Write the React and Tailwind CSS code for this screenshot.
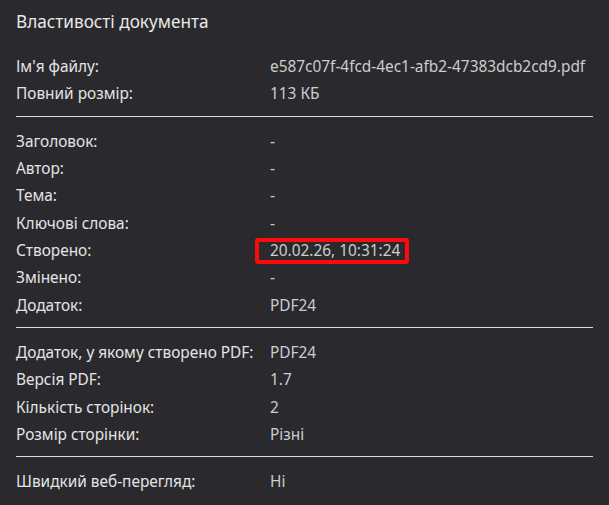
import React from "react";

const sections = [
  [
    ["Ім'я файлу:", "e587c07f-4fcd-4ec1-afb2-47383dcb2cd9.pdf"],
    ["Повний розмір:", "113 КБ"],
  ],
  [
    ["Заголовок:", "-"],
    ["Автор:", "-"],
    ["Тема:", "-"],
    ["Ключові слова:", "-"],
    ["Створено:", "20.02.26, 10:31:24", true],
    ["Змінено:", "-"],
    ["Додаток:", "PDF24"],
  ],
  [
    ["Додаток, у якому створено PDF:", "PDF24"],
    ["Версія PDF:", "1.7"],
    ["Кількість сторінок:", "2"],
    ["Розмір сторінки:", "Різні"],
  ],
  [["Швидкий веб-перегляд:", "Ні"]],
];

const Row = ({ label, value, marked }) => (
  <div className="grid grid-cols-[254px_1fr] h-[27.33px] items-center">
    <div className="text-[#e4e4e4]">{label}</div>
    <div className="text-[#cdcdcd]">
      {marked ? (
        <span className="inline-block -ml-[15px] pl-[11px] pr-[5px] border-4 border-[#ff0a0a] rounded-[3px] leading-[18px]">
          {value}
        </span>
      ) : (
        value
      )}
    </div>
  </div>
);

export default function App() {
  return (
    <div
      className="w-[609px] h-[505px] bg-[#2a2a2e] px-4 overflow-hidden text-[15.4px]"
      style={{ fontFamily: '"Noto Sans", "Open Sans", sans-serif' }}
    >
      <div className="h-[44px] flex items-center text-[17.2px] text-[#e8e8e8]">
        Властивості документа
      </div>
      <div className="mt-[9px] w-[577px]">
        {sections.map((rows, i) => (
          <div key={i}>
            {i > 0 && <div className="h-px bg-[#dcdcdc] mt-[8px] mb-[11px]" />}
            {rows.map(([label, value, marked]) => (
              <Row key={label} label={label} value={value} marked={marked} />
            ))}
          </div>
        ))}
      </div>
    </div>
  );
}
